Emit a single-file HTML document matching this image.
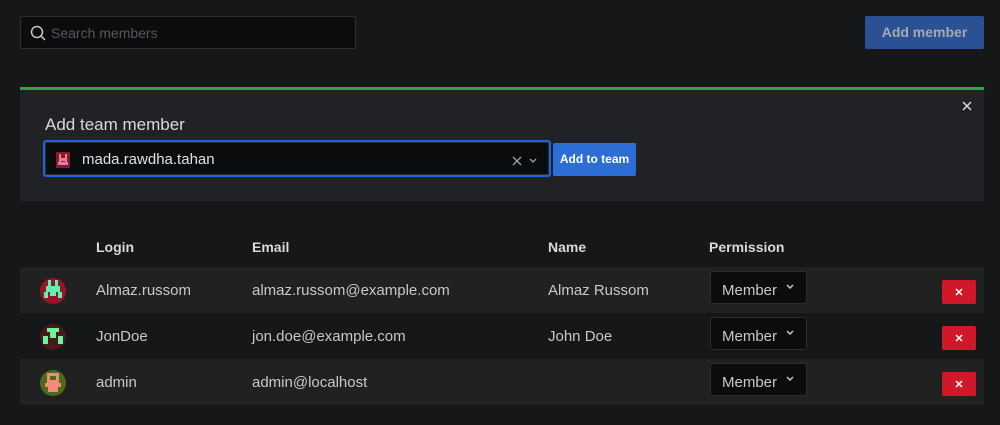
<!DOCTYPE html>
<html><head><meta charset="utf-8"><style>
*{box-sizing:border-box;margin:0;padding:0}
body{width:1000px;height:425px;background:#161719;font-family:"Liberation Sans",sans-serif;color:#d8d9da;position:relative;overflow:hidden;font-size:14px}
.abs{position:absolute}
.search{left:20px;top:16px;width:336px;height:33px;background:#0b0c0e;border:1px solid #2c2d31;border-radius:2px}
.search span{position:absolute;left:30px;top:8px;color:#55575d;font-size:14px}
.addm{left:865px;top:16px;width:119px;height:33px;background:#2a5193;border-radius:2px;color:#a5aab2;font-weight:bold;font-size:14px;text-align:center;line-height:33px}
.green{left:20px;top:87px;width:964px;height:3px;background:#2fa443}
.panel{left:20px;top:90px;width:964px;height:111px;background:#212226}
.title{left:45px;top:115px;font-size:17px;color:#d8d9da}
.sel{left:43px;top:140px;width:508px;height:37px;border:2px solid #1f62e0;border-radius:3px;background:#0b0c0e;box-shadow:inset 0 0 0 1px #2c2d31}
.sel span{position:absolute;left:37px;top:9px;font-size:15px;color:#e0e0e0}
.addt{left:553px;top:143px;width:83px;height:33px;background:#2d6ed6;border-radius:2px;color:#fff;font-weight:bold;font-size:12px;text-align:center;line-height:33px}
.hd{top:239px;font-weight:bold;font-size:14px;color:#d8d9da}
.row{left:20px;width:964px;height:46px}
.cell{font-size:15px;color:#c7c8ca}
.perm{width:97px;height:33px;background:#0b0c0e;border:1px solid #2c2d31;border-radius:3px;font-size:15px;color:#c7c8ca;padding:10px 0 0 11px}
.perm svg{position:absolute;left:75px;top:12px}
.del{left:942px;width:34px;height:24px;background:#d0182b;border-radius:2px}
.del svg{position:absolute;left:13px;top:8px}
.av{left:40px;width:26px;height:26px;border-radius:50%;overflow:hidden}
</style></head><body>
<div class="abs search"><svg class="abs" style="left:9px;top:8px" width="16" height="16" viewBox="0 0 16 16"><circle cx="7" cy="7" r="5.5" fill="none" stroke="#c7c8ca" stroke-width="1.5"/><path d="M11 11l4 4" stroke="#c7c8ca" stroke-width="1.5"/></svg><span>Search members</span></div>
<div class="abs addm">Add member</div>
<div class="abs green"></div>
<div class="abs panel"></div>
<svg class="abs" style="left:962px;top:101px" width="10" height="10"><path d="M1 1l8 8M9 1l-8 8" stroke="#d8d9da" stroke-width="1.5"/></svg>
<div class="abs title">Add team member</div>
<div class="abs sel"><svg class="abs" style="left:11px;top:10px" width="14" height="16"><rect width="14" height="16" fill="#8c1b1b"/><rect x="3" y="2" width="2" height="8" fill="#e07ab8"/><rect x="9" y="2" width="2" height="8" fill="#e07ab8"/><rect x="2" y="10" width="10" height="3" fill="#e07ab8"/><rect x="5" y="6" width="4" height="3" fill="#e07ab8"/></svg><span>mada.rawdha.tahan</span>
<svg class="abs" style="left:467px;top:14px" width="10" height="10"><path d="M1 1l8 8M9 1l-8 8" stroke="#9fa1a6" stroke-width="1.3"/></svg>
<svg class="abs" style="left:484px;top:16px" width="8" height="5"><path d="M1 1l3 3 3-3" fill="none" stroke="#9fa1a6" stroke-width="1.3"/></svg></div>
<div class="abs addt">Add to team</div>
<div class="abs hd" style="left:96px">Login</div>
<div class="abs hd" style="left:252px">Email</div>
<div class="abs hd" style="left:548px">Name</div>
<div class="abs hd" style="left:709px">Permission</div>

<div class="abs row" style="top:267px;background:#212121"></div>
<div class="abs row" style="top:359px;background:#212121"></div>

<div class="abs av" style="top:278px;background:#9a1428"><svg width="26" height="26"><rect x="8" y="2" width="3" height="6" fill="#5ef0b0"/><rect x="15" y="2" width="3" height="6" fill="#5ef0b0"/><rect x="6" y="8" width="14" height="6" fill="#5ef0b0"/><rect x="4" y="14" width="4" height="6" fill="#5ef0b0"/><rect x="18" y="14" width="4" height="6" fill="#5ef0b0"/><rect x="10" y="14" width="6" height="4" fill="#5ef0b0"/></svg></div>
<div class="abs av" style="top:324px;background:#4a1a1a"><svg width="26" height="26"><rect x="7" y="4" width="12" height="4" fill="#6cf59c"/><rect x="10" y="8" width="6" height="6" fill="#6cf59c"/><rect x="3" y="12" width="5" height="8" fill="#6cf59c"/><rect x="18" y="12" width="5" height="8" fill="#6cf59c"/></svg></div>
<div class="abs av" style="top:370px;background:#4d6a1a"><svg width="26" height="26"><rect x="7" y="3" width="12" height="10" fill="#f28a7a"/><rect x="10" y="6" width="6" height="4" fill="#4d6a1a"/><rect x="5" y="13" width="16" height="4" fill="#f28a7a"/><rect x="8" y="17" width="10" height="5" fill="#f28a7a"/></svg></div>

<div class="abs cell" style="left:96px;top:282px">Almaz.russom</div>
<div class="abs cell" style="left:252px;top:282px">almaz.russom@example.com</div>
<div class="abs cell" style="left:548px;top:282px">Almaz Russom</div>
<div class="abs cell" style="left:96px;top:328px">JonDoe</div>
<div class="abs cell" style="left:252px;top:328px">jon.doe@example.com</div>
<div class="abs cell" style="left:548px;top:328px">John Doe</div>
<div class="abs cell" style="left:96px;top:374px">admin</div>
<div class="abs cell" style="left:252px;top:374px">admin@localhost</div>

<div class="abs perm" style="left:710px;top:271px">Member<svg width="8" height="5"><path d="M1 1l3 3 3-3" fill="none" stroke="#c7c8ca" stroke-width="1.5"/></svg></div>
<div class="abs perm" style="left:710px;top:317px">Member<svg width="8" height="5"><path d="M1 1l3 3 3-3" fill="none" stroke="#c7c8ca" stroke-width="1.5"/></svg></div>
<div class="abs perm" style="left:710px;top:363px">Member<svg width="8" height="5"><path d="M1 1l3 3 3-3" fill="none" stroke="#c7c8ca" stroke-width="1.5"/></svg></div>
<div class="abs del" style="top:280px"><svg width="8" height="8"><path d="M1 1l6 6M7 1l-6 6" stroke="#fff" stroke-width="1.5"/></svg></div>
<div class="abs del" style="top:326px"><svg width="8" height="8"><path d="M1 1l6 6M7 1l-6 6" stroke="#fff" stroke-width="1.5"/></svg></div>
<div class="abs del" style="top:372px"><svg width="8" height="8"><path d="M1 1l6 6M7 1l-6 6" stroke="#fff" stroke-width="1.5"/></svg></div>
</body></html>
